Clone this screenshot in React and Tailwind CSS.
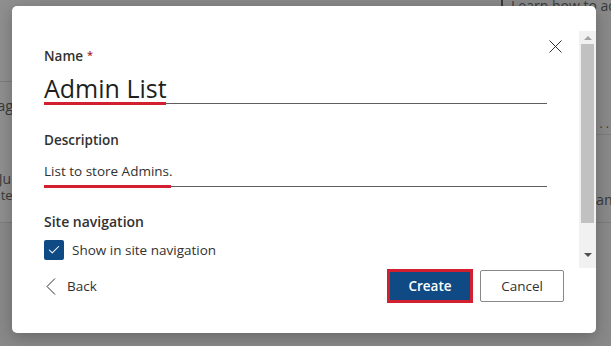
import { Check } from "lucide-react";

function Background() {
  return (
    <div className="flex h-full text-[#3a3a3a]">
      <div className="flex w-[40px] flex-col">
        <div className="h-[82px] border-b border-[#7c7c7c] bg-[#8f8f8f]" />
        <div className="flex h-[141px] flex-col border-b border-[#7c7c7c] bg-[#8f8f8f] pt-[12px] text-[15px]">
          <span className="-ml-[12px]">Page</span>
          <span className="-ml-[10px] mt-[54px] text-[14px] leading-4">t Ju</span>
          <span className="-ml-[16px] text-[13px] leading-4">Date</span>
        </div>
        <div className="flex-1" />
      </div>
      <div className="flex-1" />
      <div className="flex w-[120px] flex-col">
        <div className="flex h-[24px] items-start gap-2 pl-[10px] text-[14px] leading-[12px]">
          <span className="mt-[-2px] h-[16px] w-[16px] rounded-full border border-[#3a3a3a]" />
          <span className="whitespace-nowrap">Learn how to add</span>
        </div>
        <div className="h-[111px] border-b border-[#7c7c7c] pr-[2px] pt-[98px] text-right text-[12px] leading-3">
          · · ·
        </div>
        <div className="h-[88px] border-b border-[#7c7c7c] pl-[88px] pt-[56px] text-[15px] leading-4 whitespace-nowrap">
          Team
        </div>
      </div>
    </div>
  );
}

function Underline({ redWidth }) {
  return (
    <div className="relative h-px w-[503px] bg-[#605e5c]">
      <div
        className="absolute left-0 top-[-1px] h-[3px] bg-[#d32030]"
        style={{ width: redWidth }}
      />
    </div>
  );
}

export default function App() {
  return (
    <div
      className="relative h-[346px] w-[611px] overflow-hidden bg-[#898989]"
      style={{ fontFamily: '"Open Sans", "Noto Sans", sans-serif' }}
    >
      <Background />

      <div className="absolute left-[12px] top-[6px] flex h-[327px] w-[584px] rounded-[5px] bg-white shadow-[0_4px_16px_rgba(0,0,0,0.25)]">
        <div className="flex flex-1 flex-col pl-[32px] pr-[15px] pt-[28px] text-[#323130]">
          {/* label row with close */}
          <div className="flex items-start justify-between">
            <div className="mt-[12px] text-[13.5px] font-semibold leading-5">
              Name<span className="relative top-[-2px] ml-[4px] text-[11px] text-[#a4262c]">*</span>
            </div>
            <svg width="13" height="13" viewBox="0 0 13 13" className="mr-[2px] mt-[6px]">
              <path d="M0.5 0.5 L12.5 12.5 M12.5 0.5 L0.5 12.5" stroke="#323130" strokeWidth="1" fill="none" />
            </svg>
          </div>
          <div className="mt-[6px] text-[25px] leading-[30px] text-[#201f1e]">Admin List</div>
          <Underline redWidth={122} />

          <div className="mt-[26px] text-[13.5px] font-semibold leading-5">Description</div>
          <div className="mt-[11px] text-[13.5px] leading-5">List to store Admins.</div>
          <div className="mt-[5px]">
            <Underline redWidth={127} />
          </div>

          <div className="mt-[25px] text-[14px] font-semibold leading-5">Site navigation</div>
          <div className="mt-[8px] flex items-center gap-[8px]">
            <div className="flex h-[20px] w-[20px] items-center justify-center rounded-[2px] bg-[#0f4a85]">
              <Check className="h-[14px] w-[14px] text-white" strokeWidth={1.8} />
            </div>
            <span className="text-[13.5px] leading-5">Show in site navigation</span>
          </div>

          <div className="mt-[9px] flex items-center justify-between">
            <div className="flex items-center gap-[11px] pl-[2px] text-[13.5px]">
              <svg width="10" height="17" viewBox="0 0 10 17">
                <path d="M9 0.5 L1 8.5 L9 16.5" stroke="#323130" strokeWidth="1" fill="none" />
              </svg>
              <span>Back</span>
            </div>
            <div className="flex items-center gap-[7px]">
              <div className="border-[3px] border-[#d32030]">
                <button className="block h-[28px] w-[80px] bg-[#0f4a85] text-[13.5px] font-semibold text-white">
                  Create
                </button>
              </div>
              <button className="h-[32px] w-[84px] rounded-[2px] border border-[#8a8886] bg-white text-[13.5px] text-[#323130]">
                Cancel
              </button>
            </div>
          </div>
        </div>

        <div className="mt-[25px] flex h-[237px] w-[17px] flex-col items-center bg-[#f1f1f1]">
          <div className="mt-[5px] h-0 w-0 border-x-[4px] border-b-[4px] border-x-transparent border-b-[#a3a3a3]" />
          <div className="mt-[4px] h-[179px] w-[13px] bg-[#c1c1c1]" />
          <div className="mt-[30px] h-0 w-0 border-x-[4px] border-t-[4px] border-x-transparent border-t-[#505050]" />
        </div>
      </div>
    </div>
  );
}
